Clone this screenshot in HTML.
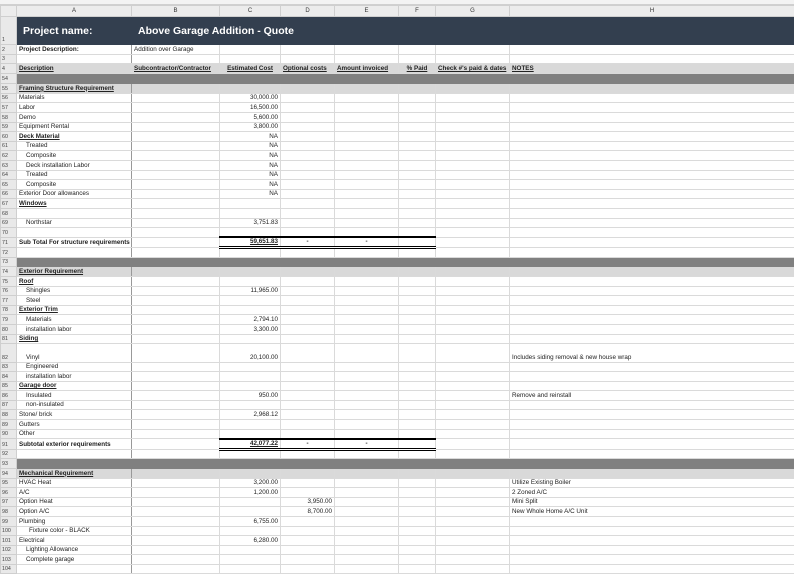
<!DOCTYPE html>
<html><head><meta charset="utf-8"><style>
body{margin:0;width:794px;height:565px;overflow:hidden;background:#fff;font-family:"Liberation Sans",Arial,sans-serif;}
.top{height:5px;background:#f3f3f3;border-bottom:1px solid #d0d0d0;box-sizing:border-box}
table{border-collapse:collapse;table-layout:fixed;width:794px}
td{border:1px solid #dadada;font-size:6.3px;color:#222;padding:0 2px;white-space:nowrap;overflow:hidden;vertical-align:bottom;line-height:8px;height:9.6px;box-sizing:border-box}
td:first-child{background:#e9e9e9;color:#444;font-size:5.3px;padding:0 0 0 1px;border-color:#cfcfcf}
tr.hd td{background:#ececec;text-align:center;height:11px;font-size:6px;color:#333;vertical-align:middle;border-color:#cfcfcf}
td.b2{border-right:1px solid #999}
.r{text-align:right}
.u{text-decoration:underline;font-weight:bold}
.bd{font-weight:bold}
.i{padding-left:9px}
tr.g td:not(:first-child){background:#d9d9d9}
tr.d td:not(:first-child){background:#808080;border-color:#808080}
tr.t td:not(:first-child){background:#333f4f;color:#fff;font-weight:bold;font-size:10.5px;border-color:#333f4f;vertical-align:middle;padding-left:6px}
.st{border-top:2px solid #000 !important;border-bottom:3px double #000 !important;text-align:right;font-weight:bold}
</style></head><body>
<div class="top"></div>
<table>
<colgroup><col style="width:16px"><col style="width:115px"><col style="width:88px"><col style="width:61px"><col style="width:54px"><col style="width:64px"><col style="width:37px"><col style="width:74px"><col style="width:285px"></colgroup>
<tr class="hd"><td></td><td>A</td><td>B</td><td>C</td><td>D</td><td>E</td><td>F</td><td>G</td><td>H</td></tr>
<tr class="t" style="height:28px"><td style="height:28px;vertical-align:bottom">1</td><td>Project name:</td><td colspan="7">Above Garage Addition - Quote</td></tr>
<tr><td>2</td><td class="bd b2">Project Description:</td><td>Addition over Garage</td><td></td><td></td><td></td><td></td><td></td><td></td></tr>
<tr><td style="height:9px">3</td><td class="b2"></td><td></td><td></td><td></td><td></td><td></td><td></td><td></td></tr>
<tr class="g"><td style="height:10px">4</td><td class="u">Description</td><td class="u">Subcontractor/Contractor</td><td class="u" style="text-align:center">Estimated Cost</td><td class="u">Optional costs</td><td class="u">Amount invoiced</td><td class="u" style="text-align:center">% Paid</td><td class="u">Check #'s paid &amp; dates</td><td class="u">NOTES</td></tr>
<tr class="d"><td style="height:10px">54</td><td></td><td></td><td></td><td></td><td></td><td></td><td></td><td></td></tr>
<tr class="g"><td style="height:9px">55</td><td class="u b2">Framing Structure Requirement</td><td></td><td></td><td></td><td></td><td></td><td></td><td></td></tr>
<tr><td>56</td><td class="b2">Materials</td><td></td><td class="r">30,000.00</td><td></td><td></td><td></td><td></td><td></td></tr>
<tr><td>57</td><td class="b2">Labor</td><td></td><td class="r">16,500.00</td><td></td><td></td><td></td><td></td><td></td></tr>
<tr><td>58</td><td class="b2">Demo</td><td></td><td class="r">5,600.00</td><td></td><td></td><td></td><td></td><td></td></tr>
<tr><td>59</td><td class="b2">Equipment Rental</td><td></td><td class="r">3,800.00</td><td></td><td></td><td></td><td></td><td></td></tr>
<tr><td>60</td><td class="u b2">Deck Material</td><td></td><td class="r">NA</td><td></td><td></td><td></td><td></td><td></td></tr>
<tr><td>61</td><td class="i b2">Treated</td><td></td><td class="r">NA</td><td></td><td></td><td></td><td></td><td></td></tr>
<tr><td>62</td><td class="i b2">Composite</td><td></td><td class="r">NA</td><td></td><td></td><td></td><td></td><td></td></tr>
<tr><td>63</td><td class="i b2">Deck installation Labor</td><td></td><td class="r">NA</td><td></td><td></td><td></td><td></td><td></td></tr>
<tr><td>64</td><td class="i b2">Treated</td><td></td><td class="r">NA</td><td></td><td></td><td></td><td></td><td></td></tr>
<tr><td>65</td><td class="i b2">Composite</td><td></td><td class="r">NA</td><td></td><td></td><td></td><td></td><td></td></tr>
<tr><td>66</td><td class="b2">Exterior Door allowances</td><td></td><td class="r">NA</td><td></td><td></td><td></td><td></td><td></td></tr>
<tr><td>67</td><td class="u b2">Windows</td><td></td><td></td><td></td><td></td><td></td><td></td><td></td></tr>
<tr><td>68</td><td class="b2"></td><td></td><td></td><td></td><td></td><td></td><td></td><td></td></tr>
<tr><td>69</td><td class="i b2">Northstar</td><td></td><td class="r">3,751.83</td><td></td><td></td><td></td><td></td><td></td></tr>
<tr><td>70</td><td class="b2"></td><td></td><td></td><td></td><td></td><td></td><td></td><td></td></tr>
<tr><td>71</td><td class="bd b2">Sub Total For structure requirements</td><td></td><td class="st" style="text-decoration:underline">59,651.83</td><td class="st" style="text-align:center">-</td><td class="st" style="text-align:center">-</td><td class="st"></td><td></td><td></td></tr>
<tr><td>72</td><td class="b2"></td><td></td><td></td><td></td><td></td><td></td><td></td><td></td></tr>
<tr class="d"><td>73</td><td></td><td></td><td></td><td></td><td></td><td></td><td></td><td></td></tr>
<tr class="g"><td>74</td><td class="u b2">Exterior Requirement</td><td></td><td></td><td></td><td></td><td></td><td></td><td></td></tr>
<tr><td>75</td><td class="u b2">Roof</td><td></td><td></td><td></td><td></td><td></td><td></td><td></td></tr>
<tr><td>76</td><td class="i b2">Shingles</td><td></td><td class="r">11,965.00</td><td></td><td></td><td></td><td></td><td></td></tr>
<tr><td>77</td><td class="i b2">Steel</td><td></td><td></td><td></td><td></td><td></td><td></td><td></td></tr>
<tr><td>78</td><td class="u b2">Exterior Trim</td><td></td><td></td><td></td><td></td><td></td><td></td><td></td></tr>
<tr><td>79</td><td class="i b2">Materials</td><td></td><td class="r">2,794.10</td><td></td><td></td><td></td><td></td><td></td></tr>
<tr><td>80</td><td class="i b2">installation labor</td><td></td><td class="r">3,300.00</td><td></td><td></td><td></td><td></td><td></td></tr>
<tr><td>81</td><td class="u b2">Siding</td><td></td><td></td><td></td><td></td><td></td><td></td><td></td></tr>
<tr><td style="height:18.4px">82</td><td class="i b2">Vinyl</td><td></td><td class="r">20,100.00</td><td></td><td></td><td></td><td></td><td>Includes siding removal &amp; new house wrap</td></tr>
<tr><td>83</td><td class="i b2">Engineered</td><td></td><td></td><td></td><td></td><td></td><td></td><td></td></tr>
<tr><td>84</td><td class="i b2">installation labor</td><td></td><td></td><td></td><td></td><td></td><td></td><td></td></tr>
<tr><td>85</td><td class="u b2">Garage door</td><td></td><td></td><td></td><td></td><td></td><td></td><td></td></tr>
<tr><td>86</td><td class="i b2">Insulated</td><td></td><td class="r">950.00</td><td></td><td></td><td></td><td></td><td>Remove and reinstall</td></tr>
<tr><td>87</td><td class="i b2">non-insulated</td><td></td><td></td><td></td><td></td><td></td><td></td><td></td></tr>
<tr><td>88</td><td class="b2">Stone/ brick</td><td></td><td class="r">2,968.12</td><td></td><td></td><td></td><td></td><td></td></tr>
<tr><td>89</td><td class="b2">Gutters</td><td></td><td></td><td></td><td></td><td></td><td></td><td></td></tr>
<tr><td>90</td><td class="b2">Other</td><td></td><td></td><td></td><td></td><td></td><td></td><td></td></tr>
<tr><td>91</td><td class="bd b2">Subtotal exterior requirements</td><td></td><td class="st" style="text-decoration:underline">42,077.22</td><td class="st" style="text-align:center">-</td><td class="st" style="text-align:center">-</td><td class="st"></td><td></td><td></td></tr>
<tr><td>92</td><td class="b2"></td><td></td><td></td><td></td><td></td><td></td><td></td><td></td></tr>
<tr class="d"><td>93</td><td></td><td></td><td></td><td></td><td></td><td></td><td></td><td></td></tr>
<tr class="g"><td>94</td><td class="u b2">Mechanical Requirement</td><td></td><td></td><td></td><td></td><td></td><td></td><td></td></tr>
<tr><td>95</td><td class="b2">HVAC Heat</td><td></td><td class="r">3,200.00</td><td></td><td></td><td></td><td></td><td>Utilize Existing Boiler</td></tr>
<tr><td>96</td><td class="b2">A/C</td><td></td><td class="r">1,200.00</td><td></td><td></td><td></td><td></td><td>2 Zoned A/C</td></tr>
<tr><td>97</td><td class="b2">Option Heat</td><td></td><td></td><td class="r">3,950.00</td><td></td><td></td><td></td><td>Mini Split</td></tr>
<tr><td>98</td><td class="b2">Option A/C</td><td></td><td></td><td class="r">8,700.00</td><td></td><td></td><td></td><td>New Whole Home A/C Unit</td></tr>
<tr><td>99</td><td class="b2">Plumbing</td><td></td><td class="r">6,755.00</td><td></td><td></td><td></td><td></td><td></td></tr>
<tr><td>100</td><td class="b2" style="padding-left:12px">Fixture color - BLACK</td><td></td><td></td><td></td><td></td><td></td><td></td><td></td></tr>
<tr><td>101</td><td class="b2">Electrical</td><td></td><td class="r">6,280.00</td><td></td><td></td><td></td><td></td><td></td></tr>
<tr><td>102</td><td class="i b2">Lighting Allowance</td><td></td><td></td><td></td><td></td><td></td><td></td><td></td></tr>
<tr><td>103</td><td class="i b2">Complete garage</td><td></td><td></td><td></td><td></td><td></td><td></td><td></td></tr>
<tr><td>104</td><td class="b2"></td><td></td><td></td><td></td><td></td><td></td><td></td><td></td></tr>
</table>
</body></html>
